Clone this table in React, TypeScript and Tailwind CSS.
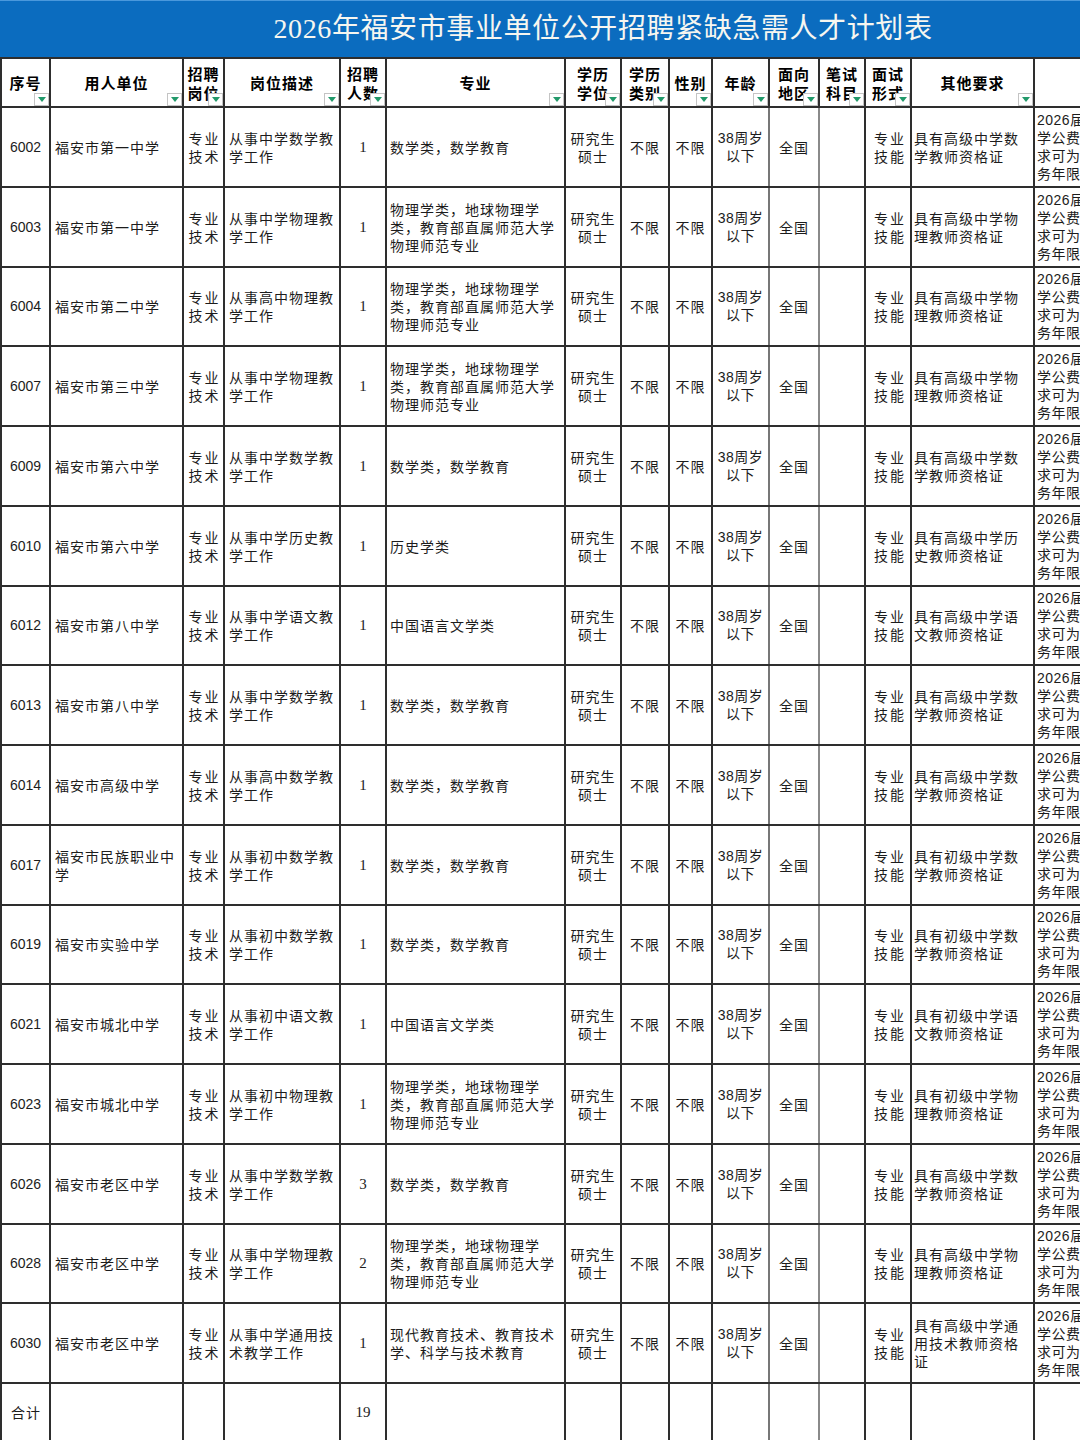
import React from "react";

type Row = {
  id: string;
  unit: string[];
  desc: string[];
  num: string;
  major: string[];
  other: string[];
};

const math = ["数学类，数学教育"];
const physics = ["物理学类，地球物理学", "类，教育部直属师范大学", "物理师范专业"];

const rows: Row[] = [
  { id: "6002", unit: ["福安市第一中学"], desc: ["从事中学数学教", "学工作"], num: "1", major: math, other: ["具有高级中学数", "学教师资格证"] },
  { id: "6003", unit: ["福安市第一中学"], desc: ["从事中学物理教", "学工作"], num: "1", major: physics, other: ["具有高级中学物", "理教师资格证"] },
  { id: "6004", unit: ["福安市第二中学"], desc: ["从事高中物理教", "学工作"], num: "1", major: physics, other: ["具有高级中学物", "理教师资格证"] },
  { id: "6007", unit: ["福安市第三中学"], desc: ["从事中学物理教", "学工作"], num: "1", major: physics, other: ["具有高级中学物", "理教师资格证"] },
  { id: "6009", unit: ["福安市第六中学"], desc: ["从事中学数学教", "学工作"], num: "1", major: math, other: ["具有高级中学数", "学教师资格证"] },
  { id: "6010", unit: ["福安市第六中学"], desc: ["从事中学历史教", "学工作"], num: "1", major: ["历史学类"], other: ["具有高级中学历", "史教师资格证"] },
  { id: "6012", unit: ["福安市第八中学"], desc: ["从事中学语文教", "学工作"], num: "1", major: ["中国语言文学类"], other: ["具有高级中学语", "文教师资格证"] },
  { id: "6013", unit: ["福安市第八中学"], desc: ["从事中学数学教", "学工作"], num: "1", major: math, other: ["具有高级中学数", "学教师资格证"] },
  { id: "6014", unit: ["福安市高级中学"], desc: ["从事高中数学教", "学工作"], num: "1", major: math, other: ["具有高级中学数", "学教师资格证"] },
  { id: "6017", unit: ["福安市民族职业中", "学"], desc: ["从事初中数学教", "学工作"], num: "1", major: math, other: ["具有初级中学数", "学教师资格证"] },
  { id: "6019", unit: ["福安市实验中学"], desc: ["从事初中数学教", "学工作"], num: "1", major: math, other: ["具有初级中学数", "学教师资格证"] },
  { id: "6021", unit: ["福安市城北中学"], desc: ["从事初中语文教", "学工作"], num: "1", major: ["中国语言文学类"], other: ["具有初级中学语", "文教师资格证"] },
  { id: "6023", unit: ["福安市城北中学"], desc: ["从事初中物理教", "学工作"], num: "1", major: physics, other: ["具有初级中学物", "理教师资格证"] },
  { id: "6026", unit: ["福安市老区中学"], desc: ["从事中学数学教", "学工作"], num: "3", major: math, other: ["具有高级中学数", "学教师资格证"] },
  { id: "6028", unit: ["福安市老区中学"], desc: ["从事中学物理教", "学工作"], num: "2", major: physics, other: ["具有高级中学物", "理教师资格证"] },
  { id: "6030", unit: ["福安市老区中学"], desc: ["从事中学通用技", "术教学工作"], num: "1", major: ["现代教育技术、教育技术", "学、科学与技术教育"], other: ["具有高级中学通", "用技术教师资格", "证"] },
];

const colWidths = [
  "w-[49px]", "w-[133px]", "w-[41px]", "w-[116px]", "w-[46px]", "w-[179px]", "w-[56px]", "w-[48px]",
  "w-[43px]", "w-[57px]", "w-[50px]", "w-[46px]", "w-[46px]", "w-[123px]", "w-[87px]",
];

const headers: { lines: string[]; filter: boolean }[] = [
  { lines: ["序号"], filter: true },
  { lines: ["用人单位"], filter: true },
  { lines: ["招聘", "岗位"], filter: true },
  { lines: ["岗位描述"], filter: true },
  { lines: ["招聘", "人数"], filter: true },
  { lines: ["专业"], filter: true },
  { lines: ["学历", "学位"], filter: true },
  { lines: ["学历", "类别"], filter: true },
  { lines: ["性别"], filter: true },
  { lines: ["年龄"], filter: true },
  { lines: ["面向", "地区"], filter: true },
  { lines: ["笔试", "科目"], filter: true },
  { lines: ["面试", "形式"], filter: true },
  { lines: ["其他要求"], filter: true },
  { lines: [], filter: false },
];

const cell = "border-[2px] border-[#2e2e2e] p-0 align-middle";

function Lines({ lines }: { lines: string[] }) {
  return (
    <>
      {lines.map((l, i) => (
        <div key={i} className="whitespace-nowrap">
          {l}
        </div>
      ))}
    </>
  );
}

function FilterButton() {
  return (
    <div className="absolute right-0 bottom-0 w-[15px] h-[13px] bg-white border border-[#c4c4c4] flex items-center justify-center">
      <svg width="8" height="5" viewBox="0 0 8 5">
        <path d="M0 0 L8 0 L4 5 Z" fill="#22996a" />
      </svg>
    </div>
  );
}

export default function App() {
  return (
    <div className="w-[1080px] h-[1440px] overflow-hidden bg-white text-[#1c1c1c] font-['Noto_Sans_CJK_SC',sans-serif]">
      {/* Title bar */}
      <div className="h-[57px] bg-[#0b6cbf] border-t border-[#4a98dc] flex items-center justify-center pl-[126px]">
        <h1 className="text-[28px] font-normal text-[#f6f6f0] font-['Liberation_Serif','Noto_Sans_CJK_SC',serif] tracking-[0.6px]">
          2026年福安市事业单位公开招聘紧缺急需人才计划表
        </h1>
      </div>

      <table className="w-[1120px] table-fixed border-collapse text-[14px] tracking-[1px] leading-[18px]">
        <colgroup>
          {colWidths.map((w, i) => (
            <col key={i} className={w} />
          ))}
        </colgroup>
        <thead>
          <tr className="h-[49px]">
            {headers.map((h, i) => (
              <th key={i} className={`${cell} relative font-bold text-[15px] leading-[19px] text-black text-center`}>
                <Lines lines={h.lines} />
                {h.filter && <FilterButton />}
              </th>
            ))}
          </tr>
        </thead>
        <tbody>
          {rows.map((r) => (
            <tr key={r.id} className="h-[79.75px]">
              <td className={`${cell} text-center tracking-normal font-['Liberation_Sans',sans-serif] text-[14px]`}>{r.id}</td>
              <td className={`${cell} pl-[4px]`}>
                <Lines lines={r.unit} />
              </td>
              <td className={`${cell} text-center tracking-[2px] pl-[2px]`}>
                <Lines lines={["专业", "技术"]} />
              </td>
              <td className={`${cell} pl-[4px]`}>
                <Lines lines={r.desc} />
              </td>
              <td className={`${cell} text-center font-['Liberation_Serif',serif] text-[15px] tracking-normal`}>{r.num}</td>
              <td className={`${cell} pl-[3px]`}>
                <Lines lines={r.major} />
              </td>
              <td className={`${cell} text-center`}>
                <Lines lines={["研究生", "硕士"]} />
              </td>
              <td className={`${cell} text-center`}>不限</td>
              <td className={`${cell} text-center`}>不限</td>
              <td className={`${cell} border-r-[#777] text-center font-['Liberation_Sans','Noto_Sans_CJK_SC',sans-serif] tracking-[0.5px]`}>
                <Lines lines={["38周岁", "以下"]} />
              </td>
              <td className={`${cell} border-r-[#8a8a8a] text-center`}>全国</td>
              <td className={cell}></td>
              <td className={`${cell} text-center tracking-[2px] pl-[4px]`}>
                <Lines lines={["专业", "技能"]} />
              </td>
              <td className={`${cell} pl-[2px]`}>
                <Lines lines={r.other} />
              </td>
              <td className={`${cell} pl-[2px] overflow-hidden tracking-[0.5px] font-['Liberation_Sans','Noto_Sans_CJK_SC',sans-serif]`}>
                <Lines lines={["2026届", "学公费", "求可为", "务年限"]} />
              </td>
            </tr>
          ))}
          <tr className="h-[58px]">
            <td className={`${cell} pl-[9px]`}>合计</td>
            <td className={cell}></td>
            <td className={cell}></td>
            <td className={cell}></td>
            <td className={`${cell} text-center font-['Liberation_Serif',serif] text-[15px] tracking-normal`}>19</td>
            <td className={cell}></td>
            <td className={cell}></td>
            <td className={cell}></td>
            <td className={cell}></td>
            <td className={`${cell} border-r-[#777]`}></td>
            <td className={`${cell} border-r-[#8a8a8a]`}></td>
            <td className={cell}></td>
            <td className={cell}></td>
            <td className={cell}></td>
            <td className={cell}></td>
          </tr>
        </tbody>
      </table>
    </div>
  );
}
